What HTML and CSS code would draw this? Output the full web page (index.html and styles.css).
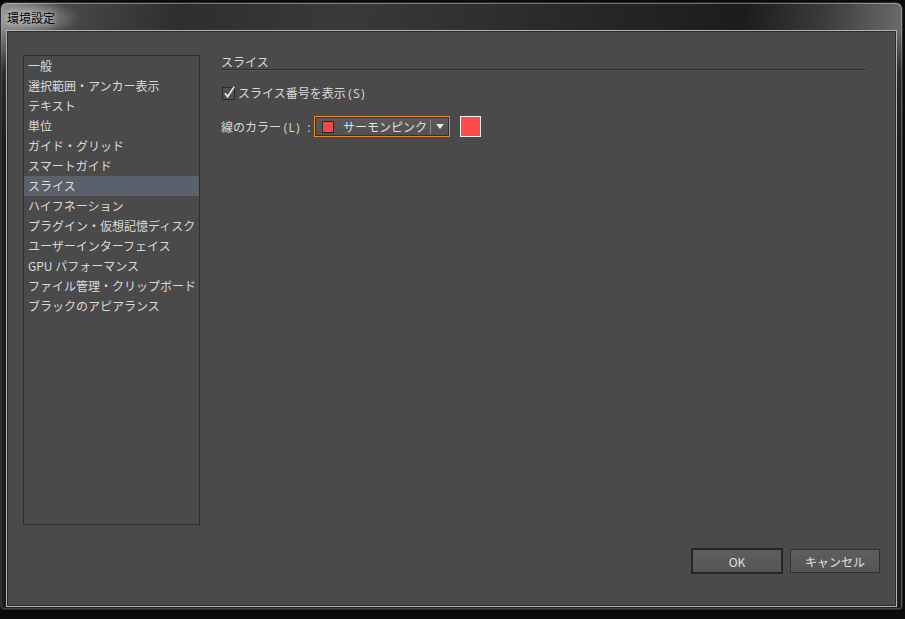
FILE: index.html
```html
<!DOCTYPE html>
<html lang="ja">
<head>
<meta charset="utf-8">
<title>環境設定</title>
<link rel="stylesheet" href="styles.css">
</head>
<body>
<div class="window">
  <div class="titlebar"><span class="title">環境設定</span></div>
  <div class="content">
    <div class="main">
      <ul class="catlist">
        <li>一般</li>
        <li>選択範囲・アンカー表示</li>
        <li>テキスト</li>
        <li>単位</li>
        <li>ガイド・グリッド</li>
        <li>スマートガイド</li>
        <li class="selected">スライス</li>
        <li>ハイフネーション</li>
        <li>プラグイン・仮想記憶ディスク</li>
        <li>ユーザーインターフェイス</li>
        <li>GPU パフォーマンス</li>
        <li>ファイル管理・クリップボード</li>
        <li>ブラックのアピアランス</li>
      </ul>
      <div class="panel">
        <div class="heading">スライス</div>
        <label class="checkrow">
          <svg class="checkbox" width="14" height="14" viewBox="0 0 14 14">
            <rect x="0.5" y="1.5" width="12" height="12" fill="#4f4f4f" stroke="#2a2a2a"/>
            <path d="M3 7.2 L5.6 10.8 L12.2 0.8" fill="none" stroke="#e6e6e6" stroke-width="1.7"/>
          </svg>
          <span>スライス番号を表示 <span class="latin">(S)</span></span>
        </label>
        <div class="colorrow">
          <span class="colorlabel">線のカラー <span class="latin">(L) :</span></span>
          <div class="dropdown">
            <span class="chip"></span>
            <span class="ddtext">サーモンピンク</span>
            <span class="ddsep"></span>
            <svg class="ddarrow" width="8" height="5" viewBox="0 0 8 5"><path d="M0 0 H8 L4 5 Z" fill="#e8e8e8"/></svg>
          </div>
          <span class="swatch"></span>
        </div>
      </div>
    </div>
    <div class="footer">
      <button class="btn btn-default">OK</button>
      <button class="btn">キャンセル</button>
    </div>
  </div>
</div>
</body>
</html>
```
FILE: styles.css
```css
html, body {
  margin: 0;
  padding: 0;
  background: #0b0b0b;
}
body {
  font-family: "Noto Sans CJK JP", "Noto Sans", sans-serif;
  font-size: 12px;
  color: #d8d8d8;
  padding-top: 2px;
}
.window {
  width: 903px;
  height: 608px;
  box-sizing: border-box;
  border: 1px solid #2a2a2a;
  border-radius: 7px 7px 4px 4px;
  box-shadow: inset 0 1px 0 rgba(255,255,255,0.35), inset 1px 0 0 rgba(255,255,255,0.12), inset -1px 0 0 rgba(255,255,255,0.25), inset 0 -1px 0 rgba(255,255,255,0.18);
  background:
    linear-gradient(to bottom, rgba(30,30,30,0) 28px, rgba(30,30,30,0.85) 70px, #1e1e1e 140px),
    linear-gradient(100deg, #8a8a8a 0%, #4a4a4a 6%, #2e2e2e 18%, #3a3a3a 34%, #2a2a2a 55%, #1c1c1c 74%, #3c3c3c 82%, #6c6c6c 90%, #828282 100%);
  display: flex;
  flex-direction: column;
  overflow: hidden;
}
.titlebar {
  height: 28px;
  display: flex;
  align-items: center;
  padding-left: 6px;
  background: radial-gradient(ellipse 50px 17px at 30px 15px, rgba(210,210,210,0.6), rgba(210,210,210,0));
}
.title {
  color: #050505;
  font-size: 12px;
  text-shadow: 0 0 6px rgba(255,255,255,0.7);
}
.content {
  margin: 0 6px 3px 6px;
  flex: 1;
  background: #4a4a4a;
  border: 1px solid #2b2b2b;
  box-shadow: 0 0 0 1px #b4b4b4;
  display: flex;
  flex-direction: column;
  padding: 23px 15px 30px 15px;
}
.main {
  display: flex;
  gap: 21px;
}
.catlist {
  list-style: none;
  margin: 0;
  padding: 0;
  width: 177px;
  height: 470px;
  box-sizing: border-box;
  border: 1px solid #2c2c2c;
}
.catlist li {
  height: 20px;
  line-height: 20px;
  padding-left: 4px;
  white-space: nowrap;
  color: #dadada;
}
.catlist li.selected {
  background: #5a616c;
}
.panel {
  flex: 1;
  padding-right: 14px;
}
.heading {
  line-height: 14px;
  height: 14px;
  border-bottom: 1px solid #303030;
  box-shadow: 0 1px 0 #535353;
  color: #dadada;
}
.latin {
  font-family: "Open Sans", "Noto Sans", sans-serif;
  font-size: 12px;
  letter-spacing: 1.3px;
  word-spacing: 2px;
}
.checkrow {
  margin-top: 15px;
  height: 16px;
  display: flex;
  align-items: center;
  padding-left: 1px;
  gap: 2px;
  color: #dadada;
}
.checkbox {
  overflow: visible;
}
.colorrow {
  margin-top: 15px;
  display: flex;
  align-items: center;
  height: 21px;
}
.colorlabel {
  width: 93px;
  color: #dadada;
  white-space: nowrap;
}
.dropdown {
  width: 136px;
  height: 21px;
  box-sizing: border-box;
  border: 1px solid #e88a2a;
  box-shadow: inset 0 0 0 1px #333;
  background: linear-gradient(#5a5a5a, #515151);
  display: flex;
  align-items: center;
  padding-left: 7px;
}
.chip {
  width: 10px;
  height: 10px;
  border: 1px solid #2a2a2a;
  background: #f04a4a;
}
.ddtext {
  margin-left: 9px;
  color: #e2e2e2;
  width: 87px;
  white-space: nowrap;
}
.ddsep {
  width: 1px;
  height: 14px;
  background: #8a8a8a;
}
.ddarrow {
  margin-left: 5px;
}
.swatch {
  margin-left: 10px;
  width: 21px;
  height: 21px;
  box-sizing: border-box;
  border: 1px solid #f0f0f0;
  background: #ff4b4b;
}
.footer {
  margin-top: 23px;
  display: flex;
  justify-content: flex-end;
  align-items: center;
  gap: 7px;
  height: 26px;
}
.btn {
  font-family: inherit;
  font-size: 12px;
  color: #e0e0e0;
  background: linear-gradient(#5e5e5e, #555555);
  border: 1px solid #303030;
  width: 90px;
  height: 24px;
  padding: 0;
  margin: 0;
}
.btn-default {
  width: 92px;
  height: 26px;
  border: 2px solid #262626;
}
```
